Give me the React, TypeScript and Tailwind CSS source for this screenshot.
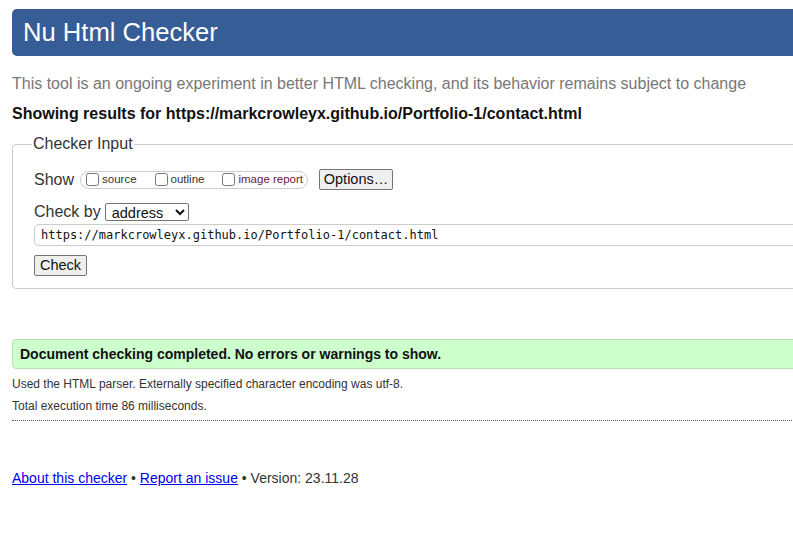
import { useState } from "react";

const sans = { fontFamily: '"Liberation Sans", Arial, sans-serif' };

const ShowOption = ({ label, className = "" }: { label: string; className?: string }) => (
  <label className={`flex shrink-0 items-center gap-[3px] whitespace-nowrap ${className}`}>
    <input type="checkbox" className="m-0 h-[13px] w-[13px]" />
    <span className="text-[11.5px] leading-none">{label}</span>
  </label>
);

const App = () => {
  const [url, setUrl] = useState("https://markcrowleyx.github.io/Portfolio-1/contact.html");

  return (
    <div className="w-full min-h-[540px] overflow-hidden bg-white text-[#222]" style={sans}>
      <div className="w-[860px] pl-3">
        <h1 className="mt-[9px] flex h-[47px] items-center rounded-l-[5px] bg-[#365d95] pl-[11px] text-[25.6px] font-normal text-white">
          Nu Html Checker
        </h1>

        <p className="mt-[19px] text-[16px] leading-[18px] text-[#777]">
          This tool is an ongoing experiment in better HTML checking, and its behavior remains subject to change
        </p>
        <p className="mt-[12px] text-[16px] font-bold leading-[18px] text-[#111]">
          Showing results for https://markcrowleyx.github.io/Portfolio-1/contact.html
        </p>

        <fieldset className="mt-[12px] rounded-[4px] border border-[#ccc] pb-[12px] pl-[21px]">
          <legend className="-ml-[2px] px-[1px] text-[16px] leading-[18px] text-[#333]">Checker Input</legend>

          <div className="mt-[16px] flex items-center">
            <span className="text-[16px] leading-[18px] text-[#333]">Show</span>
            <div className="ml-[6px] flex h-[18px] w-[228px] shrink-0 items-center rounded-full border border-[#ccc] pl-[5px] text-[#333]">
              <ShowOption label="source" />
              <ShowOption label="outline" className="ml-[18px]" />
              <ShowOption label="image report" className="ml-[18px] text-[#6b1a3a]" />
            </div>
            <button className="ml-[11px] h-[21px] w-[74px] rounded-[2px] border border-[#767676] bg-[#efefef] text-[14.5px] leading-none text-[#111]">
              Options…
            </button>
          </div>

          <div className="mt-[13px] flex items-center">
            <span className="text-[16px] leading-[18px] text-[#333]">Check by</span>
            <select className="ml-[4px] h-[18px] w-[84px] rounded-[2px] border border-[#767676] bg-white pl-[2px] text-[14.5px] leading-none text-[#111]">
              <option>address</option>
              <option>file upload</option>
              <option>text input</option>
            </select>
          </div>

          <input
            value={url}
            onChange={(e) => setUrl(e.target.value)}
            className="mt-[3px] block h-[22px] w-full rounded-[5px] border border-[#ccc] pl-[6px] text-[12px] text-[#111] outline-none"
            style={{ fontFamily: '"DejaVu Sans Mono", Consolas, monospace' }}
          />

          <button className="mt-[9px] block h-[21px] w-[53px] rounded-[2px] border border-[#767676] bg-[#efefef] text-[14.5px] leading-none text-[#111]">
            Check
          </button>
        </fieldset>

        <div className="mt-[50px] flex h-[30px] items-center rounded-l-[4px] border border-[#b5e3b5] bg-[#ccffcc] pl-[7px] text-[14px] font-bold text-[#111]">
          Document checking completed. No errors or warnings to show.
        </div>

        <p className="mt-[8px] text-[12px] leading-[14px] text-[#333]">
          Used the HTML parser. Externally specified character encoding was utf-8.
        </p>
        <p className="mt-[8px] text-[12px] leading-[14px] text-[#333]">Total execution time 86 milliseconds.</p>
        <div className="mt-[7px] border-b border-dotted border-[#555]" />

        <p className="mt-[49px] text-[14px] leading-[16px] text-[#333]">
          <a href="#" className="text-[#0000ee] underline">About this checker</a>
          {" • "}
          <a href="#" className="text-[#0000ee] underline">Report an issue</a>
          {" • Version: 23.11.28"}
        </p>
      </div>
    </div>
  );
};

export default App;
